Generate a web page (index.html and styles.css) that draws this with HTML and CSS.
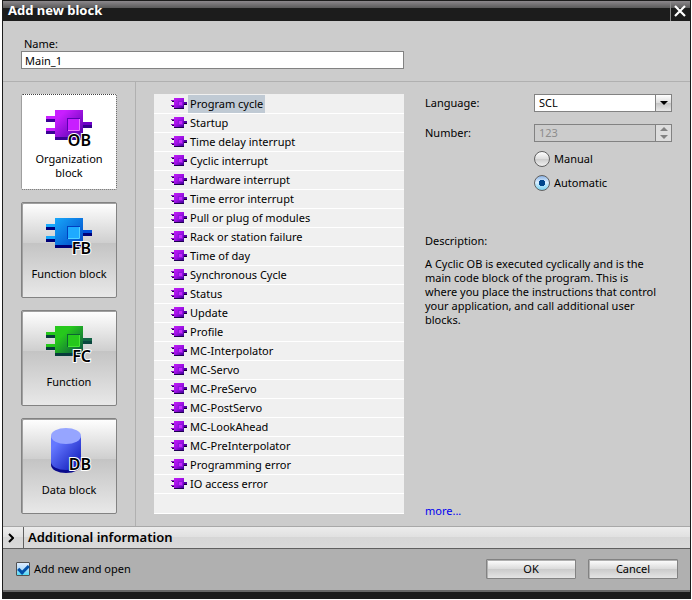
FILE: index.html
```html
<!DOCTYPE html>
<html lang="en">
<head>
    <meta charset="UTF-8">
    <meta name="viewport" content="width=device-width, initial-scale=1.0">
    <title>Add new block</title>
    <link rel="stylesheet" href="styles.css">
</head>
<body>
    <!-- shared icon shapes -->
    <svg class="icon-defs" aria-hidden="true">
        <defs>
            <linearGradient id="obFill" x1="0" y1="0" x2="1" y2="1">
                <stop offset="0.2" stop-color="#c81eff"/>
                <stop offset="1" stop-color="#5000a8"/>
            </linearGradient>
            <linearGradient id="chipFill" x1="0" y1="0" x2="1" y2="1">
                <stop offset="0" stop-color="#be1ef5"/>
                <stop offset="0.5" stop-color="#a010e6"/>
                <stop offset="1" stop-color="#3c0096"/>
            </linearGradient>
            <linearGradient id="fbFill" x1="0" y1="0" x2="1" y2="1">
                <stop offset="0" stop-color="#18a8fa"/>
                <stop offset="1" stop-color="#0046c8"/>
            </linearGradient>
            <linearGradient id="fcFill" x1="0" y1="0" x2="1" y2="1">
                <stop offset="0.3" stop-color="#26c81c"/>
                <stop offset="1" stop-color="#0c5044"/>
            </linearGradient>
            <linearGradient id="dbFill" x1="0" y1="0" x2="1" y2="1">
                <stop offset="0.2" stop-color="#6478ff"/>
                <stop offset="1" stop-color="#0a14b4"/>
            </linearGradient>
            <symbol id="chip" viewBox="0 0 16 12">
                <path d="M0 2h4v1H0zM0 7h4v1H0z" fill="#8c14c8"/>
                <path d="M1 3h3v1H1zM1 8h3v1H1z" fill="#1e0046"/>
                <rect x="3" y="0" width="10" height="10" fill="url(#chipFill)"/>
                <path d="M3 10h10v1H3z" fill="#1e0050"/>
                <rect x="7.5" y="3.5" width="4" height="4" fill="#c828ff" stroke="#8c14dc"/>
                <path d="M13 4h3v2h-3z" fill="#5000a0"/>
                <path d="M13 6h3v1h-3z" fill="#140032"/>
            </symbol>
        </defs>
    </svg>

    <div class="dialog">
        <header class="title-bar">
            <h1>Add new block</h1>
            <button type="button" class="close-btn" aria-label="Close">
                <svg width="12" height="12" viewBox="0 0 12 12"><path d="M1 1L11 11M11 1L1 11" stroke="#fff" stroke-width="2.2"/></svg>
            </button>
        </header>

        <div class="name-section">
            <label for="blockName">Name:</label>
            <input type="text" id="blockName" class="text-input" value="Main_1">
        </div>

        <div class="content">
            <nav class="block-types">
                <button type="button" class="type-btn selected">
                    <svg class="type-icon" viewBox="0 0 48 40">
                        <path d="M1 8h9v3H1zM1 20h9v3H1z" fill="#c81eff"/>
                        <path d="M1 11h9v3H1zM1 23h9v3H1z" fill="#3c0096"/>
                        <rect x="10" y="2" width="28" height="27" fill="url(#obFill)"/>
                        <path d="M10 29h28v3H10z" fill="#3c0096"/>
                        <path d="M38 14h9v3h-9z" fill="#6e00c8"/>
                        <path d="M38 17h9v3h-9z" fill="#32008c"/>
                        <rect x="22.5" y="10.5" width="12" height="12" fill="#c81eff" stroke="#5a00b4"/>
                        <path d="M23 22.5h11.5V11" fill="none" stroke="#ec78ff"/>
                        <text x="46" y="38">OB</text>
                    </svg>
                    <span class="type-label">Organization block</span>
                </button>
                <button type="button" class="type-btn">
                    <svg class="type-icon" viewBox="0 0 48 40">
                        <path d="M1 8h9v3H1zM1 20h9v3H1z" fill="#18a8fa"/>
                        <path d="M1 11h9v3H1zM1 23h9v3H1z" fill="#000078"/>
                        <rect x="10" y="2" width="28" height="27" fill="url(#fbFill)"/>
                        <path d="M10 29h28v3H10z" fill="#000078"/>
                        <path d="M38 14h9v3h-9z" fill="#0050dc"/>
                        <path d="M38 17h9v3h-9z" fill="#000078"/>
                        <rect x="22.5" y="10.5" width="12" height="12" fill="#1eaaff" stroke="#0040c0"/>
                        <path d="M23 22.5h11.5V11" fill="none" stroke="#50d2ff"/>
                        <text x="46" y="38">FB</text>
                    </svg>
                    <span class="type-label">Function block</span>
                </button>
                <button type="button" class="type-btn">
                    <svg class="type-icon" viewBox="0 0 48 40">
                        <path d="M1 8h9v3H1zM1 20h9v3H1z" fill="#26c81c"/>
                        <path d="M1 11h9v3H1zM1 23h9v3H1z" fill="#083c3c"/>
                        <rect x="10" y="2" width="28" height="27" fill="url(#fcFill)"/>
                        <path d="M10 29h28v3H10z" fill="#083c3c"/>
                        <path d="M38 14h9v3h-9z" fill="#146446"/>
                        <path d="M38 17h9v3h-9z" fill="#0a463e"/>
                        <rect x="22.5" y="10.5" width="12" height="12" fill="#26c81c" stroke="#0c6432"/>
                        <path d="M23 22.5h11.5V11" fill="none" stroke="#46e632"/>
                        <text x="46" y="38">FC</text>
                    </svg>
                    <span class="type-label">Function</span>
                </button>
                <button type="button" class="type-btn">
                    <svg class="type-icon" viewBox="0 0 48 40">
                        <path d="M6 4V33a15 8 0 0 0 30 0V4z" fill="#0a0a8c"/>
                        <path d="M6 4V30a15 8 0 0 0 30 0V4z" fill="url(#dbFill)"/>
                        <ellipse cx="21" cy="4" rx="15" ry="8" fill="#96a5ff"/>
                        <text x="46" y="38">DB</text>
                    </svg>
                    <span class="type-label">Data block</span>
                </button>
            </nav>

            <div class="details">
                <ul class="event-list">
                    <li class="selected"><svg><use href="#chip"/></svg><span>Program cycle</span></li>
                    <li><svg><use href="#chip"/></svg><span>Startup</span></li>
                    <li><svg><use href="#chip"/></svg><span>Time delay interrupt</span></li>
                    <li><svg><use href="#chip"/></svg><span>Cyclic interrupt</span></li>
                    <li><svg><use href="#chip"/></svg><span>Hardware interrupt</span></li>
                    <li><svg><use href="#chip"/></svg><span>Time error interrupt</span></li>
                    <li><svg><use href="#chip"/></svg><span>Pull or plug of modules</span></li>
                    <li><svg><use href="#chip"/></svg><span>Rack or station failure</span></li>
                    <li><svg><use href="#chip"/></svg><span>Time of day</span></li>
                    <li><svg><use href="#chip"/></svg><span>Synchronous Cycle</span></li>
                    <li><svg><use href="#chip"/></svg><span>Status</span></li>
                    <li><svg><use href="#chip"/></svg><span>Update</span></li>
                    <li><svg><use href="#chip"/></svg><span>Profile</span></li>
                    <li><svg><use href="#chip"/></svg><span>MC-Interpolator</span></li>
                    <li><svg><use href="#chip"/></svg><span>MC-Servo</span></li>
                    <li><svg><use href="#chip"/></svg><span>MC-PreServo</span></li>
                    <li><svg><use href="#chip"/></svg><span>MC-PostServo</span></li>
                    <li><svg><use href="#chip"/></svg><span>MC-LookAhead</span></li>
                    <li><svg><use href="#chip"/></svg><span>MC-PreInterpolator</span></li>
                    <li><svg><use href="#chip"/></svg><span>Programming error</span></li>
                    <li><svg><use href="#chip"/></svg><span>IO access error</span></li>
                </ul>

                <div class="settings">
                    <div class="field">
                        <label for="language">Language:</label>
                        <div class="control">
                            <select id="language">
                                <option>SCL</option>
                            </select>
                            <span class="drop-arrow"><svg width="8" height="4" viewBox="0 0 8 4"><path d="M0 0h8L4 4z"/></svg></span>
                        </div>
                    </div>
                    <div class="field">
                        <label for="number">Number:</label>
                        <div class="control disabled">
                            <input type="text" id="number" value="123" disabled>
                            <span class="spinner">
                                <svg width="8" height="4" viewBox="0 0 8 4"><path d="M0 4h8L4 0z"/></svg>
                                <svg width="8" height="4" viewBox="0 0 8 4"><path d="M0 0h8L4 4z"/></svg>
                            </span>
                        </div>
                    </div>
                    <div class="radio-group">
                        <label><input type="radio" name="numbering">Manual</label>
                        <label><input type="radio" name="numbering" checked>Automatic</label>
                    </div>
                    <h2>Description:</h2>
                    <p class="description">A Cyclic OB is executed cyclically and is the main code block of the program. This is where you place the instructions that control your application, and call additional user blocks.</p>
                    <a href="#" class="more-link">more...</a>
                </div>
            </div>
        </div>

        <div class="additional">
            <button type="button" class="expand-btn" aria-label="Expand">
                <svg width="6" height="10" viewBox="0 0 6 10"><path d="M1 1l4 4-4 4" fill="none" stroke="#000" stroke-width="2"/></svg>
            </button>
            <h2>Additional information</h2>
        </div>

        <footer class="footer">
            <label class="open-option"><input type="checkbox" checked>Add new and open</label>
            <button type="button" class="action-btn">OK</button>
            <button type="button" class="action-btn">Cancel</button>
        </footer>
    </div>
</body>
</html>
```
FILE: styles.css
```css
* {
    box-sizing: border-box;
}

body {
    margin: 0;
    padding: 0 1px 0 2px;
    background: #fff;
    font-family: "Noto Sans", "Open Sans", sans-serif;
    font-size: 11px;
    line-height: 14px;
    color: #000;
}

h1, h2, p, ul {
    margin: 0;
    padding: 0;
}

button, input, select {
    font: inherit;
    color: inherit;
}

.icon-defs {
    position: absolute;
    width: 0;
    height: 0;
}

.dialog {
    background: #ccc;
    border: 1px solid #1c1c1c;
    border-bottom-width: 7px;
}

/* title */
.title-bar {
    display: flex;
    justify-content: space-between;
    height: 20px;
    background: linear-gradient(#8c888c, #5a5a5a 7px, #1c1c1c 7px);
}

.title-bar h1 {
    padding-left: 5px;
    font-size: 13px;
    line-height: 19px;
    color: #fff;
}

.close-btn {
    display: flex;
    align-items: center;
    justify-content: center;
    width: 20px;
    padding: 0 2px 0 0;
    border: 0;
    border-left: 1px solid #8c8c8c;
    background: none;
}

.name-section {
    display: flex;
    flex-direction: column;
    height: 61px;
    padding: 16px 18px 0;
    border-bottom: 1px solid #b0b0b0;
}

.name-section label {
    padding-left: 3px;
}

.text-input {
    width: 383px;
    height: 18px;
    padding: 0 3px;
    border: 1px solid #828282;
    background: #fff;
}

/* main area */
.content {
    display: flex;
}

.block-types {
    display: flex;
    flex-direction: column;
    gap: 12px;
    padding: 12px 18px;
    border-right: 1px solid #b0b0b0;
}

.type-btn {
    display: flex;
    flex-direction: column;
    align-items: center;
    width: 96px;
    height: 96px;
    padding: 13px 4px 0;
    border: 1px solid #828282;
    border-radius: 2px;
    background: linear-gradient(#fff, #cecece 43%, #c4c4c4 43%, #e8e8e8);
    box-shadow: inset 1px 1px #a0a0a0;
}

.type-btn.selected {
    border: 1px dotted #404040;
    background: #fff;
    box-shadow: none;
}

.type-icon {
    width: 48px;
    height: 40px;
    flex: none;
    overflow: visible;
}

.type-icon text {
    font-size: 16px;
    font-weight: 600;
    text-anchor: end;
    stroke: #fff;
    stroke-width: 2px;
    paint-order: stroke;
}

.type-label {
    display: flex;
    align-items: center;
    height: 28px;
    margin-top: 4px;
}

.details {
    display: flex;
    flex: 1;
    gap: 21px;
    padding: 12px 18px;
}

.event-list {
    width: 250px;
    padding-top: 1px;
    background: #f0f0f0;
    border-bottom: 1px solid #fff;
    list-style: none;
}

.event-list li {
    display: flex;
    align-items: center;
    gap: 1px;
    height: 19px;
    padding-left: 17px;
    border-bottom: 1px solid #fff;
}

.event-list svg {
    width: 16px;
    height: 12px;
}

.event-list span {
    padding: 2px;
}

.event-list .selected span {
    background: #c0cad4;
}

.settings {
    display: flex;
    flex: 1;
    flex-direction: column;
}

.field {
    display: flex;
    align-items: center;
    justify-content: space-between;
    margin-bottom: 12px;
}

.control {
    display: flex;
    width: 138px;
    height: 18px;
    border: 1px solid #828282;
    background: #fff;
}

.control select,
.control input {
    flex: 1;
    min-width: 0;
    padding: 0 4px;
    border: 0;
    background: none;
    appearance: none;
}

.control.disabled {
    background: #ccc;
    color: #8c8c8c;
}

.drop-arrow,
.spinner {
    display: flex;
    align-items: center;
    justify-content: center;
    width: 16px;
    border-left: 1px solid #828282;
    background: linear-gradient(#fff, #ddd 50%, #c4c4c4 50%, #e8e8e8);
    pointer-events: none;
}

.spinner {
    flex-direction: column;
    gap: 4px;
    background: #ddd;
    fill: #828282;
}

.radio-group {
    display: flex;
    flex-direction: column;
    gap: 8px;
    width: 138px;
    margin: -3px 0 43px auto;
}

.radio-group label,
.open-option {
    display: flex;
    align-items: center;
    gap: 4px;
    height: 16px;
}

.radio-group input {
    width: 16px;
    height: 16px;
    margin: 0;
    border: 1px solid #606060;
    border-radius: 50%;
    background: linear-gradient(#fff, #ddd 50%, #ccc 50%, #f0f0f0);
    appearance: none;
}

.radio-group input:checked {
    background: radial-gradient(circle, #00468c 3px, transparent 3px), linear-gradient(#8cb4e6, #dcf0ff 45%, #78d2f0);
}

.settings h2 {
    margin-bottom: 9px;
    font-size: 11px;
    font-weight: normal;
}

.description {
    padding-right: 11px;
}

.more-link {
    margin-top: auto;
    margin-bottom: -4px;
    color: #0000f0;
    text-decoration: none;
}

/* bottom */
.additional {
    display: flex;
    height: 23px;
    border-top: 1px solid #a8a8a8;
    border-bottom: 1px solid #606060;
    background: linear-gradient(#ececec, #e0e0e0 50%, #d6d6d6 50%, #dadada);
}

.expand-btn {
    display: flex;
    align-items: center;
    justify-content: center;
    width: 21px;
    padding: 0 4px 0 0;
    border: 0;
    border-right: 1px solid #606060;
    background: none;
}

.additional h2 {
    padding-left: 4px;
    font-size: 13px;
    font-weight: 600;
    line-height: 20px;
}

.footer {
    display: flex;
    align-items: center;
    gap: 12px;
    height: 43px;
    padding: 0 12px 2px 13px;
    border-bottom: 2px solid #686868;
    background: #b0b0b0;
}

.open-option {
    flex: 1;
}

.open-option input {
    width: 14px;
    height: 14px;
    margin: 0;
    border: 1px solid #505050;
    border-radius: 1px;
    background: linear-gradient(#dcebff, #b4dcfa 50%, #50dcf5);
    appearance: none;
}

.open-option input:checked::before {
    content: "";
    display: block;
    width: 8px;
    height: 4px;
    margin: 2px auto 0;
    border: solid #0050aa;
    border-width: 0 0 3px 3px;
    transform: rotate(-45deg);
}

.action-btn {
    width: 90px;
    height: 20px;
    padding: 0;
    border: 1px solid #828282;
    border-radius: 1px;
    background: linear-gradient(#fff, #dadada 50%, #cacaca 50%, #e4e4e4);
    box-shadow: inset 1px 1px #b0b0b0;
    line-height: 16px;
}
```
